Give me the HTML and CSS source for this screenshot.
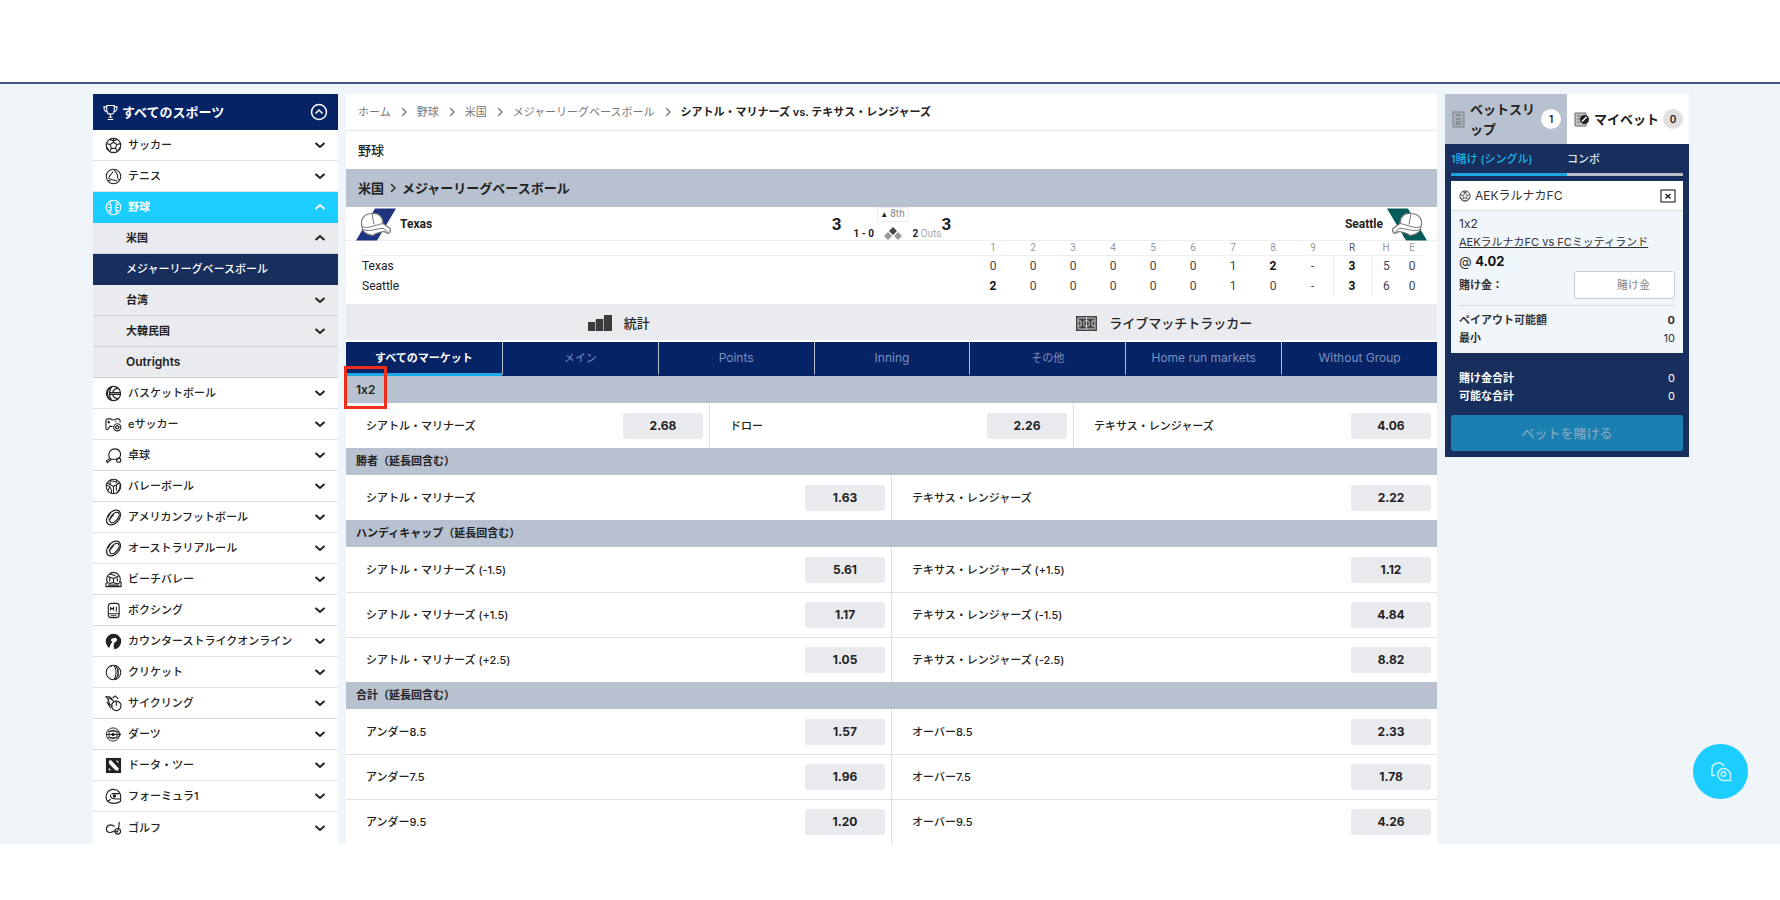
FILE: index.html
```html
<!DOCTYPE html>
<html lang="ja">
<head>
<meta charset="utf-8">
<title>シアトル・マリナーズ vs. テキサス・レンジャーズ</title>
<link rel="stylesheet" href="styles.css">
</head>
<body>
<svg class="defs" aria-hidden="true">
  <symbol id="down" viewBox="0 0 12 12"><path d="M1.5 4 6 8l4.500-4" fill="none" stroke="currentColor" stroke-width="2"/></symbol>
  <symbol id="up" viewBox="0 0 12 12"><path d="M1.500 8 6 4l4.500 4" fill="none" stroke="currentColor" stroke-width="2"/></symbol>
  <symbol id="next" viewBox="0 0 8 10"><path d="M2 1l4 4-4 4" fill="none" stroke="currentColor" stroke-width="1.300"/></symbol>
  <symbol id="soccer" viewBox="0 0 18 18"><g fill="none" stroke="currentColor" stroke-width="1.200"><circle cx="9" cy="9" r="7.700"/><path d="M9 5.500 12.500 8l-1.300 4H6.800L5.500 8zM9 5.500V1.500M12.500 8l4-1M11.200 12l2 3.500M6.800 12l-2 3.500M5.500 8l-4-1M5 2.500 9 4l4-1.500M1.500 10.500 4 13.500M16.500 10.500 14 13.500M6.500 16.300h5"/></g></symbol>
  <symbol id="tennis" viewBox="0 0 18 18"><g fill="none" stroke="currentColor" stroke-width="1.100"><circle cx="9" cy="9" r="7.700"/><path d="M8 3.500C8.500 7 4 7.500 4 10.500c1 3 6 1.500 9 3.300M10 1.500c0 3 4 4 3.500 7-.3 2-1 3 2.500 4M3 13.500h3"/></g></symbol>
  <symbol id="baseball" viewBox="0 0 18 18"><g fill="none" stroke="currentColor" stroke-width="1.100"><circle cx="9" cy="9" r="7.700"/><path d="M5 2.500c2 4 2 9 0 13M13 2.500c-2 4-2 9 0 13M3.500 6l2.500-.5M3.500 9h3M3.500 12l2.500.5M14.500 6 12 5.500M14.500 9h-3M14.500 12l-2.500.5"/></g></symbol>
  <symbol id="basket" viewBox="0 0 18 18"><g fill="none" stroke="currentColor" stroke-width="1.300"><circle cx="9" cy="9" r="7.500"/><path d="M5 8h11M5 10h11M7 2c-3 4-3 10 0 14M5 2.500c-3 4-3 9 0 13M14 3.500c-3 0-5 1-6 4.500M14 14.500c-3 0-5-1-6-4.500"/></g></symbol>
  <symbol id="esoccer" viewBox="0 0 18 18"><g fill="none" stroke="currentColor" stroke-width="1.200"><path d="M1 13V5c0-1 1-2 2-2h3l1 1h4l1-1h2c1 0 2 1 2 2v2M1 13c0 2 2 2 3 0l1-2h3M4 5v3M2.500 6.500h3M11 6h1"/><circle cx="13" cy="12" r="3.800"/><path d="M13 10l2 1.500-1 2h-2l-1-2z"/></g></symbol>
  <symbol id="pingpong" viewBox="0 0 18 18"><g fill="none" stroke="currentColor" stroke-width="1.200"><path d="M5 12C2.500 8 5 2 10.500 2c5 0 7.500 5 5 9l-2 2H6.500zM5 12l-3.500 3 1 1.500L7 13"/><circle cx="14.500" cy="14" r="2.200"/></g></symbol>
  <symbol id="volley" viewBox="0 0 18 18"><g fill="none" stroke="currentColor" stroke-width="1.100"><circle cx="9" cy="9" r="7.700"/><path d="M9 9V16.500M9 9 2 5M9 9l7-4M5 3c4 0 7 1 9 3M2 8c3 0 5 3 5 8M12 16c3-2 4-5 4-9M5.500 7V3M12 7.500v6M5 9.500l-2 4M12 4.500V2"/></g></symbol>
  <symbol id="football" viewBox="0 0 18 18"><g fill="none" stroke="currentColor" stroke-width="1.300"><ellipse cx="9" cy="9" rx="9" ry="6" transform="rotate(-50 9 9)"/><ellipse cx="10" cy="9" rx="6.500" ry="3.500" transform="rotate(-50 10 9)"/><path d="M6 3.500 3 9M4 12l5-6"/></g></symbol>
  <symbol id="beach" viewBox="0 0 18 18"><g fill="none" stroke="currentColor" stroke-width="1.200"><path d="M2.500 12C0 6 5 1.500 9 1.500S18 6 15.500 12M9 8 2.500 5.500M9 8l6-3M9 8v4M5 3l6 2M5 7v4M13 7v4M1 13c2-2 3 1 5 0s3-1 5 0 3 0 6-1v4.500H1zM3 15h12"/></g></symbol>
  <symbol id="boxing" viewBox="0 0 18 18"><g fill="none" stroke="currentColor" stroke-width="1.200"><rect x="3.500" y="1.500" width="11.500" height="15" rx="3"/><path d="M4 12.500h11M6 5v4M6 7h3M9 5v4M12 5v5M6 14.500h6"/></g></symbol>
  <symbol id="cs" viewBox="0 0 18 18"><circle cx="9" cy="9" r="8.200" fill="currentColor"/><path d="M4 17 6 12 8 9l-2-1 1-2 4-1 2 2-1 2-2 1-1 4 1 3z" fill="#fff"/></symbol>
  <symbol id="cricket" viewBox="0 0 18 18"><g fill="none" stroke="currentColor" stroke-width="1.100"><circle cx="9" cy="9" r="7.700"/><path d="M9.500 1.500c3 4 3 11 0 15M11.500 2c3 4 3 10 0 14M14 5v8M6 2l1 1"/></g></symbol>
  <symbol id="cycling" viewBox="0 0 18 18"><g fill="none" stroke="currentColor" stroke-width="1.200"><circle cx="12" cy="11.500" r="5"/><path d="M12 11.500V6M1 2h4l2 2H3zM3 4l2 6 3 2M8 3l3-2 3 3M6 4l4 3M2 7l4 7"/></g></symbol>
  <symbol id="darts" viewBox="0 0 18 18"><g fill="none" stroke="currentColor" stroke-width="1"><circle cx="8.500" cy="9" r="7"/><circle cx="8.500" cy="9" r="4.500"/><path d="M1 9h15M3 5.500h11M3 12.500h11M13 6l4 3-4 3"/></g><circle cx="8.500" cy="9" r="1.800" fill="currentColor"/></symbol>
  <symbol id="dota" viewBox="0 0 18 18"><rect x="1" y="1" width="16" height="16" fill="currentColor"/><path d="M4 4l2.500-.5 8 8.500-.5 2.500L11 14 4.500 7.500zM11.500 4h2.500v2.500zM4 11.500 6.500 14H4z" fill="#fff"/></symbol>
  <symbol id="f1" viewBox="0 0 18 18"><g fill="none" stroke="currentColor" stroke-width="1.200"><path d="M2.500 14C-1 8 3 1.500 9 1.500c5 0 8 4 7.500 8.500v4c-4 3-10 3-14 0zM7 6h8M6 7c-1 4 2 5 10 4.500M3 14l3-2"/></g><circle cx="10" cy="8.500" r="1.800" fill="currentColor"/></symbol>
  <symbol id="golf" viewBox="0 0 18 18"><g fill="none" stroke="currentColor" stroke-width="1.200"><path d="M15 2c.5 4-1 8-2 11M10 7C7 4 2 5 1.500 9s4 5.500 7.500 3c2-1 4 0 4 1.500"/><circle cx="13.500" cy="12" r="3"/></g></symbol>
  <symbol id="cap" viewBox="0 0 40 32"><path d="M19 0h21L21 32H0z" fill="var(--team)"/><path d="M6 18C4 11 8 5 16 5c7-1 11 4 11 10l7 5c1 2 0 4-2 5l-4-2c-4 1-8 1-11 4C10 26 6 23 6 18z" fill="#fff" stroke="#777" stroke-width="1.200"/><path d="M6 18c6 3 14-2 21-3M7 21c7 3 16-2 21-1l4 4M16 5l2 11" fill="none" stroke="#777" stroke-width="1"/></symbol>
</svg>

<div class="stage">
  <div class="layout">
    <nav class="sports" aria-label="スポーツ">
      <button class="sports-head"><svg class="trophy" viewBox="0 0 16 18"><path d="M4 1.500h8V7c0 5-8 5-8 0zM4 3H1c0 4 1 5 4 5.500M12 3h3c0 4-1 5-4 5.500M8 11v3M5 16.500h6M6 14h4" fill="none" stroke="currentColor" stroke-width="1.200"/></svg><span class="grow">すべてのスポーツ</span><svg class="ring" viewBox="0 0 18 18"><circle cx="9" cy="9" r="7.500" fill="none" stroke="currentColor" stroke-width="1.500"/><path d="M5.500 10.500 9 7l3.500 3.500" fill="none" stroke="currentColor" stroke-width="1.500"/></svg></button>
      <button class="sport"><svg class="ico"><use href="#soccer"/></svg><span class="grow">サッカー</span><svg class="chev"><use href="#down"/></svg></button>
      <button class="sport"><svg class="ico"><use href="#tennis"/></svg><span class="grow">テニス</span><svg class="chev"><use href="#down"/></svg></button>
      <button class="sport open"><svg class="ico"><use href="#baseball"/></svg><span class="grow">野球</span><svg class="chev"><use href="#up"/></svg></button>
      <button class="sport sub"><span class="grow">米国</span><svg class="chev"><use href="#up"/></svg></button>
      <a class="sport sub current" href="#mlb"><span class="grow">メジャーリーグベースボール</span></a>
      <button class="sport sub"><span class="grow">台湾</span><svg class="chev"><use href="#down"/></svg></button>
      <button class="sport sub"><span class="grow">大韓民国</span><svg class="chev"><use href="#down"/></svg></button>
      <a class="sport sub latin" href="#outrights"><span class="grow">Outrights</span></a>
      <button class="sport"><svg class="ico"><use href="#basket"/></svg><span class="grow">バスケットボール</span><svg class="chev"><use href="#down"/></svg></button>
      <button class="sport"><svg class="ico"><use href="#esoccer"/></svg><span class="grow">eサッカー</span><svg class="chev"><use href="#down"/></svg></button>
      <button class="sport"><svg class="ico"><use href="#pingpong"/></svg><span class="grow">卓球</span><svg class="chev"><use href="#down"/></svg></button>
      <button class="sport"><svg class="ico"><use href="#volley"/></svg><span class="grow">バレーボール</span><svg class="chev"><use href="#down"/></svg></button>
      <button class="sport"><svg class="ico"><use href="#football"/></svg><span class="grow">アメリカンフットボール</span><svg class="chev"><use href="#down"/></svg></button>
      <button class="sport"><svg class="ico"><use href="#football"/></svg><span class="grow">オーストラリアルール</span><svg class="chev"><use href="#down"/></svg></button>
      <button class="sport"><svg class="ico"><use href="#beach"/></svg><span class="grow">ビーチバレー</span><svg class="chev"><use href="#down"/></svg></button>
      <button class="sport"><svg class="ico"><use href="#boxing"/></svg><span class="grow">ボクシング</span><svg class="chev"><use href="#down"/></svg></button>
      <button class="sport"><svg class="ico"><use href="#cs"/></svg><span class="grow">カウンターストライクオンライン</span><svg class="chev"><use href="#down"/></svg></button>
      <button class="sport"><svg class="ico"><use href="#cricket"/></svg><span class="grow">クリケット</span><svg class="chev"><use href="#down"/></svg></button>
      <button class="sport"><svg class="ico"><use href="#cycling"/></svg><span class="grow">サイクリング</span><svg class="chev"><use href="#down"/></svg></button>
      <button class="sport"><svg class="ico"><use href="#darts"/></svg><span class="grow">ダーツ</span><svg class="chev"><use href="#down"/></svg></button>
      <button class="sport"><svg class="ico"><use href="#dota"/></svg><span class="grow">ドータ・ツー</span><svg class="chev"><use href="#down"/></svg></button>
      <button class="sport"><svg class="ico"><use href="#f1"/></svg><span class="grow">フォーミュラ1</span><svg class="chev"><use href="#down"/></svg></button>
      <button class="sport"><svg class="ico"><use href="#golf"/></svg><span class="grow">ゴルフ</span><svg class="chev"><use href="#down"/></svg></button>
    </nav>

    <main class="main">
      <nav class="crumbs" aria-label="パンくず">
        <a href="#home">ホーム</a><svg class="sep"><use href="#next"/></svg><a href="#baseball-top">野球</a><svg class="sep"><use href="#next"/></svg><a href="#usa">米国</a><svg class="sep"><use href="#next"/></svg><a href="#mlb">メジャーリーグベースボール</a><svg class="sep"><use href="#next"/></svg><strong>シアトル・マリナーズ vs. テキサス・レンジャーズ</strong>
      </nav>
      <div class="title">野球</div>
      <div class="league">米国<svg class="sep"><use href="#next"/></svg>メジャーリーグベースボール</div>

      <section class="match">
        <div class="team home"><svg class="cap"><use href="#cap"/></svg>Texas</div>
        <div class="score">
          <b class="runs">3</b>
          <div class="state">
            <div class="inning">▲ <span>8th</span></div>
            <div class="count"><b>1 - 0</b><svg class="bases" viewBox="0 0 20 14"><path d="M10 0l4 4-4 4-4-4z" fill="#444"/><path d="M5 5l4 4-4 4-4-4zM15 5l4 4-4 4-4-4z" fill="#999"/></svg><span><b>2</b> Outs</span></div>
          </div>
          <b class="runs">3</b>
        </div>
        <div class="team away">Seattle<svg class="cap"><use href="#cap"/></svg></div>
      </section>

      <div class="board">
        <table>
          <thead><tr><th class="name"></th><th>1</th><th>2</th><th>3</th><th>4</th><th>5</th><th>6</th><th>7</th><th>8</th><th>9</th><th class="r">R</th><th class="h">H</th><th class="e">E</th></tr></thead>
          <tbody>
            <tr><th class="name">Texas</th><td>0</td><td>0</td><td>0</td><td>0</td><td>0</td><td>0</td><td>1</td><td><b>2</b></td><td>-</td><td class="r"><b>3</b></td><td>5</td><td>0</td></tr>
            <tr><th class="name">Seattle</th><td><b>2</b></td><td>0</td><td>0</td><td>0</td><td>0</td><td>0</td><td>1</td><td>0</td><td>-</td><td class="r"><b>3</b></td><td>6</td><td>0</td></tr>
          </tbody>
        </table>
      </div>

      <div class="tools">
        <button><svg class="bars" viewBox="0 0 24 16"><path d="M0 7h7v9H0zM8 4h7v12H8zM16 0h8v16h-8z" fill="#3b3b3b"/><path d="M7.500 5v11M15.500 3v13" stroke="#aaa"/></svg>統計</button>
        <button><svg class="pitch" viewBox="0 0 21 15"><rect width="21" height="15" fill="#444"/><path d="M10.500 1v13M2 2h17v11H2zM2 5h3v5H2M19 5h-3v5h3" fill="none" stroke="#ccc"/><circle cx="10.500" cy="7.500" r="3" fill="none" stroke="#ccc"/></svg>ライブマッチトラッカー</button>
      </div>

      <div class="tabs">
        <button class="on">すべてのマーケット</button><button>メイン</button><button class="latin">Points</button><button class="latin">Inning</button><button>その他</button><button class="latin">Home run markets</button><button class="latin">Without Group</button>
      </div>

      <section class="market">
        <h2 class="latin">1x2<span class="mark"></span></h2>
        <div class="line">
          <div class="pick"><span>シアトル・マリナーズ</span><button>2.68</button></div>
          <div class="pick"><span>ドロー</span><button>2.26</button></div>
          <div class="pick"><span>テキサス・レンジャーズ</span><button>4.06</button></div>
        </div>
      </section>
      <section class="market">
        <h2>勝者（延長回含む）</h2>
        <div class="line">
          <div class="pick"><span>シアトル・マリナーズ</span><button>1.63</button></div>
          <div class="pick"><span>テキサス・レンジャーズ</span><button>2.22</button></div>
        </div>
      </section>
      <section class="market">
        <h2>ハンディキャップ（延長回含む）</h2>
        <div class="line">
          <div class="pick"><span>シアトル・マリナーズ (-1.5)</span><button>5.61</button></div>
          <div class="pick"><span>テキサス・レンジャーズ (+1.5)</span><button>1.12</button></div>
        </div>
        <div class="line">
          <div class="pick"><span>シアトル・マリナーズ (+1.5)</span><button>1.17</button></div>
          <div class="pick"><span>テキサス・レンジャーズ (-1.5)</span><button>4.84</button></div>
        </div>
        <div class="line">
          <div class="pick"><span>シアトル・マリナーズ (+2.5)</span><button>1.05</button></div>
          <div class="pick"><span>テキサス・レンジャーズ (-2.5)</span><button>8.82</button></div>
        </div>
      </section>
      <section class="market">
        <h2>合計（延長回含む）</h2>
        <div class="line">
          <div class="pick"><span>アンダー8.5</span><button>1.57</button></div>
          <div class="pick"><span>オーバー8.5</span><button>2.33</button></div>
        </div>
        <div class="line">
          <div class="pick"><span>アンダー7.5</span><button>1.96</button></div>
          <div class="pick"><span>オーバー7.5</span><button>1.78</button></div>
        </div>
        <div class="line">
          <div class="pick"><span>アンダー9.5</span><button>1.20</button></div>
          <div class="pick"><span>オーバー9.5</span><button>4.26</button></div>
        </div>
      </section>
    </main>

    <aside class="slip">
      <div class="slip-tabs">
        <button class="on"><svg class="slip-ico" viewBox="0 0 13 17"><rect x="1" y="1" width="11" height="15" fill="#a9adb4" stroke="#7c828b"/><path d="M4 4h5M4 8h5M4 11h5M4 13h5" stroke="#6d737c"/></svg><span>ベットスリップ</span><i>1</i></button>
        <button><svg class="my-ico" viewBox="0 0 16 17"><path d="M1 2h11v13H1z" fill="#c4c4c4" stroke="#666"/><path d="M3 5h4M3 8h3M3 11h3" stroke="#666"/><circle cx="10.500" cy="8.500" r="4.500" fill="#222"/><path d="M8 10.500l4.500-4.500" stroke="#fff" stroke-width="1.500"/></svg><span>マイベット</span><i>0</i></button>
      </div>
      <div class="slip-body">
        <div class="modes"><button class="on">1賭け (シングル)</button><button>コンボ</button></div>
        <div class="card">
          <div class="card-head"><svg class="ball"><use href="#soccer"/></svg><span class="grow">AEKラルナカFC</span><button class="close" aria-label="削除"><svg viewBox="0 0 16 14"><rect x="1" y="1" width="14" height="12" fill="none" stroke="#333" stroke-width="1.200"/><path d="M5.500 5l5 4.500M10.500 5l-5 4.500" stroke="#222" stroke-width="1.500"/></svg></button></div>
          <div class="card-body">
            <div class="latin">1x2</div>
            <a href="#match">AEKラルナカFC vs FCミッティランド</a>
            <div class="odds">@ <b>4.02</b></div>
            <div class="stake"><label for="stake">賭け金：</label><input id="stake" type="text" placeholder="賭け金"></div>
            <div class="pair top"><b>ペイアウト可能額</b><b>0</b></div>
            <div class="pair"><b>最小</b><span>10</span></div>
          </div>
        </div>
        <div class="sums">
          <div class="pair"><b>賭け金合計</b><span>0</span></div>
          <div class="pair"><b>可能な合計</b><span>0</span></div>
        </div>
        <button class="place">ベットを賭ける</button>
      </div>
    </aside>
  </div>
  <button class="chat" aria-label="チャット"><svg viewBox="0 0 22 22"><g fill="none" stroke="#c9f3ff" stroke-width="1.500"><path d="M2 15V9a6.500 6.500 0 0 1 12-4M2 14.500h3.500"/><path d="M20.500 19.500H13a6 6 0 1 1 6-9l1.500 1.500z"/><circle cx="13.500" cy="13" r="2.300"/></g></svg></button>
</div>
</body>
</html>
```
FILE: styles.css
```css
:root {
  --navy: #062366;
  --deep: #182e5c;
  --bar: #b7c1cf;
  --pale: #e9ebef;
  --cyan: #1ccdff;
}
* { box-sizing: border-box; }
body {
  margin: 0;
  padding: 82px 0 56px;
  background: #fff;
  color: #222;
  font-family: Inter, "Noto Sans CJK JP", sans-serif;
  font-feature-settings: "calt" 0;
  font-size: 11px;
  line-height: 16px;
}
button, input {
  font: inherit;
  font-feature-settings: inherit;
  color: inherit;
  border: 0;
  border-radius: 0;
  background: none;
  padding: 0;
  margin: 0;
}
a { color: inherit; text-decoration: none; }
svg { flex: none; display: block; }
.defs { position: absolute; width: 0; height: 0; }
.grow { flex: 1; }

.stage {
  position: relative;
  background: #f0f5f9;
  border-top: 2px solid #3f5485;
  padding: 10px 91px 0 93px;
}
.layout {
  display: grid;
  grid-template-columns: 245px minmax(0, 1fr) 244px;
  gap: 8px;
  align-items: start;
}

.sports { display: flex; flex-direction: column; background: #fff; }
.sports-head {
  display: flex;
  align-items: center;
  gap: 4px;
  height: 36px;
  padding: 0 10px;
  background: var(--navy);
  color: #fff;
  font-size: 13px;
  font-weight: 700;
  text-align: left;
}
.trophy { width: 15px; height: 17px; }
.ring { width: 18px; height: 18px; }
.sport {
  display: flex;
  align-items: center;
  gap: 6px;
  height: 31px;
  padding: 0 12px 0 12px;
  border-bottom: 1px solid #dcdee1;
  font-weight: 500;
  text-align: left;
}
.sport:last-child { height: 32px; border-bottom: 0; }
.ico { width: 17px; height: 17px; }
.chev { width: 12px; height: 12px; }
.sport.open { background: var(--cyan); border-color: var(--cyan); color: #fff; font-weight: 700; }
.sport.sub { padding-left: 33px; background: var(--pale); border-color: #cfd2d7; font-weight: 600; }
.sport.sub.current { background: var(--deep); border-color: var(--deep); color: #fff; font-weight: 500; }

.main { background: #fff; }
.sep { width: 8px; height: 10px; }
.crumbs {
  display: flex;
  align-items: center;
  gap: 9px;
  height: 38px;
  padding: 0 12px;
  border-bottom: 3px solid #f1f3f6;
  color: #777;
}
.crumbs strong { color: #222; font-weight: 600; }
.title { padding: 8px 12px 9px; font-size: 13px; line-height: 20px; font-weight: 500; }
.league {
  display: flex;
  align-items: center;
  gap: 5px;
  height: 38px;
  padding: 0 12px;
  background: var(--bar);
  font-size: 13px;
  font-weight: 600;
}
.match {
  display: grid;
  grid-template-columns: 1fr auto 1fr;
  height: 34px;
  padding: 0 10px;
  border-bottom: 1px solid #eee;
  font-family: Roboto, sans-serif;
}
.team { display: flex; align-items: center; gap: 4px; font-size: 12px; font-weight: 700; }
.cap { width: 40px; height: 33px; }
.home { --team: #1e3480; }
.away { --team: #045c5a; justify-content: flex-end; }
.away .cap { transform: scaleX(-1); }
.score { display: flex; align-items: center; }
.runs { font-size: 17px; }
.state { width: 88px; margin-left: 12px; font-size: 10px; line-height: 12px; }
.inning { width: 32px; margin: 0 auto 5px 23px; border: 1px solid #eee; font-size: 8px; line-height: 12px; text-align: center; }
.inning span { font-size: 10px; color: #888; }
.count { display: flex; align-items: center; justify-content: space-between; color: #aaa; }
.count b { color: #222; }
.bases { width: 20px; height: 14px; }

.board { padding: 0 14px 8px 16px; }
.board table {
  width: 100%;
  border-collapse: collapse;
  table-layout: fixed;
  font-family: Roboto, sans-serif;
  font-size: 12px;
  text-align: center;
}
.board th, .board td { width: 40px; padding: 0; line-height: 20px; color: #444; }
.board b { color: #111; }
.board thead th { font-size: 10px; line-height: 14px; font-weight: 400; color: #999; border-bottom: 1px solid #eee; }
.board .name { width: auto; text-align: left; font-weight: 400; color: #222; }
.board th.r { width: 38px; color: #555; }
.board .r { border-left: 1px solid #eee; border-right: 1px solid #eee; }
.board thead .r { border-left: 0; border-right: 0; }
.board th.h { width: 30px; }
.board th.e { width: 22px; }

.tools { display: grid; grid-template-columns: 1fr 1fr; border-bottom: 2px solid #fff; background: var(--pale); }
.tools button { display: flex; align-items: center; justify-content: center; gap: 12px; height: 36px; padding-top: 2px; font-size: 13px; font-weight: 500; }
.bars { width: 24px; height: 16px; }
.pitch { width: 21px; height: 15px; }

.tabs { display: grid; grid-template-columns: repeat(7, 1fr); background: var(--navy); }
.tabs button { height: 34px; padding-top: 1px; border-bottom: 3px solid var(--navy); color: #7d90bd; }
.tabs button + button { border-left: 1px solid #b7c1cf; }
.tabs .on { border-bottom-color: #18a9e6; color: #fff; font-weight: 700; }

.market h2 {
  position: relative;
  margin: 0;
  padding: 0 10px;
  background: var(--bar);
  font-size: 11px;
  line-height: 27px;
  font-weight: 600;
}
.mark { position: absolute; left: -2px; top: -10px; width: 43px; height: 43px; border: 3px solid #ee2d1b; z-index: 1; }
.line { display: flex; }
.line + .line { border-top: 1px solid #dde1e6; }
.pick {
  flex: 1;
  display: flex;
  align-items: center;
  justify-content: space-between;
  height: 45px;
  padding: 0 6px 0 20px;
  font-weight: 500;
}
.line + .line .pick { height: 44px; }
.pick + .pick { border-left: 1px solid #dde1e6; }
.pick button { width: 80px; height: 26px; border-radius: 3px; background: #e9eaee; font-size: 12px; font-weight: 700; }
.sport.latin, .tabs .latin, .market .latin, .card .latin { font-size: 12px; }

.slip-tabs { display: grid; grid-template-columns: 1fr 1fr; }
.slip-tabs button {
  display: flex;
  align-items: center;
  justify-content: space-between;
  height: 50px;
  padding: 0 6px 0 7px;
  background: #fff;
  font-size: 13px;
  line-height: 20px;
  font-weight: 600;
  text-align: left;
}
.slip-tabs .on { background: var(--bar); }
.slip-tabs span { max-width: 66px; }
.slip-tabs i { width: 20px; height: 20px; border-radius: 50%; background: #e0e0e0; font-size: 10px; font-style: normal; text-align: center; }
.slip-tabs .on i { background: #fff; }
.slip-ico { width: 13px; height: 17px; }
.my-ico { width: 16px; height: 17px; }
.slip-body { padding: 0 6px 6px; background: var(--deep); }
.modes { display: grid; grid-template-columns: 1fr 1fr; margin-bottom: 5px; }
.modes button { height: 32px; border-bottom: 3px solid #b9bec9; color: #dfe3ec; font-weight: 500; text-align: left; }
.modes .on { border-color: #1ca5da; color: #1cb5ea; }
.card { background: #f1f6fa; color: #333; }
.card-head { display: flex; align-items: center; gap: 4px; height: 30px; padding: 0 7px 0 8px; border-bottom: 1px solid #ddd; background: #fff; font-size: 12px; }
.ball { width: 12px; height: 12px; }
.close svg { width: 16px; height: 14px; }
.card-body { padding: 4px 8px 6px; line-height: 18px; }
.card-body a { display: block; text-decoration: underline; white-space: nowrap; }
.odds { font-size: 13px; line-height: 20px; }
.odds b { color: #111; }
.stake { display: flex; align-items: center; justify-content: space-between; height: 28px; font-weight: 600; }
.stake input { width: 101px; height: 28px; padding: 0 24px; border: 1px solid #ccc; border-radius: 3px; background: #fff; font-weight: 400; text-align: right; }
.stake input::placeholder { color: #888; }
.pair { display: flex; justify-content: space-between; line-height: 18px; }
.pair b { font-weight: 700; }
.pair.top { margin-top: 6px; padding-top: 5px; border-top: 1px solid #ddd; }
.sums { padding: 16px 8px 10px; color: #fff; }
.place { width: 100%; height: 36px; border-radius: 2px; background: #1b80b1; color: #7fa5c0; font-size: 13px; font-weight: 500; }

.chat {
  position: absolute;
  right: 32px;
  bottom: 45px;
  display: grid;
  place-items: center;
  width: 55px;
  height: 55px;
  border-radius: 50%;
  background: var(--cyan);
}
.chat svg { width: 22px; height: 22px; }
```
